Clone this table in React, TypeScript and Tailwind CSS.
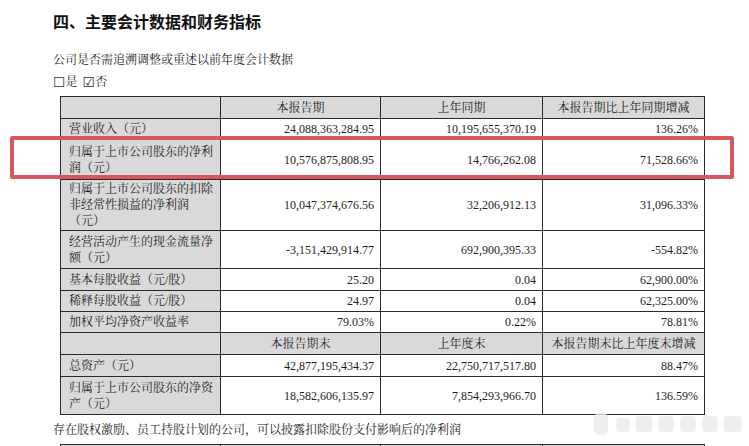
import React from 'react';

const serif = "font-['Liberation_Serif','Noto_Serif_CJK_SC','Noto_Sans_CJK_SC',serif]";

type Row = { label: string; a: string; b: string; c: string; h: string };

const rows: Row[] = [
  { label: '营业收入（元）', a: '24,088,363,284.95', b: '10,195,655,370.19', c: '136.26%', h: 'h-[21px]' },
  { label: '归属于上市公司股东的净利润（元）', a: '10,576,875,808.95', b: '14,766,262.08', c: '71,528.66%', h: 'h-[40px]' },
  { label: '归属于上市公司股东的扣除非经常性损益的净利润（元）', a: '10,047,374,676.56', b: '32,206,912.13', c: '31,096.33%', h: 'h-[51px]' },
  { label: '经营活动产生的现金流量净额（元）', a: '-3,151,429,914.77', b: '692,900,395.33', c: '-554.82%', h: 'h-[38px]' },
  { label: '基本每股收益（元/股）', a: '25.20', b: '0.04', c: '62,900.00%', h: 'h-[22px]' },
  { label: '稀释每股收益（元/股）', a: '24.97', b: '0.04', c: '62,325.00%', h: 'h-[21px]' },
  { label: '加权平均净资产收益率', a: '79.03%', b: '0.22%', c: '78.81%', h: 'h-[21px]' },
];

const rows2: Row[] = [
  { label: '总资产（元）', a: '42,877,195,434.37', b: '22,750,717,517.80', c: '88.47%', h: 'h-[22px]' },
  { label: '归属于上市公司股东的净资产（元）', a: '18,582,606,135.97', b: '7,854,293,966.70', c: '136.59%', h: 'h-[38px]' },
];

function HeadRow({ cols, h }: { cols: string[]; h: string }) {
  return (
    <tr className={`${h} bg-[#d9d9d9]`}>
      <td className="border border-[#2a2a2a]"></td>
      {cols.map((c) => (
        <td key={c} className="border border-[#2a2a2a] text-center px-1">{c}</td>
      ))}
    </tr>
  );
}

function DataRow({ r }: { r: Row }) {
  return (
    <tr className={r.h}>
      <td className="border border-[#2a2a2a] bg-[#d9d9d9] pl-[8px] pr-[4px] py-0 leading-[16px] align-middle">{r.label}</td>
      <td className="border border-[#2a2a2a] text-right pr-[6px]">{r.a}</td>
      <td className="border border-[#2a2a2a] text-right pr-[6px]">{r.b}</td>
      <td className="border border-[#2a2a2a] text-right pr-[6px]">{r.c}</td>
    </tr>
  );
}

export default function App() {
  return (
    <div className={`relative w-[749px] h-[446px] overflow-hidden bg-white text-[#1e1e1e] ${serif}`}>
      <div className="pl-[53px]">
        <h1 className="mt-[10px] leading-[23px] text-[16px] font-bold font-['Noto_Sans_CJK_SC',sans-serif] text-[#111]">
          四、主要会计数据和财务指标
        </h1>
        <p className="mt-[19px] leading-[16px] text-[12px]">公司是否需追溯调整或重述以前年度会计数据</p>
        <p className="mt-[6px] leading-[16px] text-[12px] flex items-center">
          <span className="font-['DejaVu_Sans',sans-serif] text-[14px] leading-[16px] text-[#333]">☐</span>
          <span>是</span>
          <span className="ml-[5px] font-['DejaVu_Sans',sans-serif] text-[14px] leading-[16px] text-[#333]">☑</span>
          <span>否</span>
        </p>

        <table className="mt-[6px] ml-[7px] w-[644px] table-fixed border-collapse text-[12px] leading-[16px]">
          <colgroup>
            <col className="w-[160px]" />
            <col className="w-[160px]" />
            <col className="w-[162px]" />
            <col className="w-[162px]" />
          </colgroup>
          <tbody>
            <HeadRow cols={['本报告期', '上年同期', '本报告期比上年同期增减']} h="h-[22px]" />
            {rows.map((r) => (
              <DataRow key={r.label} r={r} />
            ))}
            <HeadRow cols={['本报告期末', '上年度末', '本报告期末比上年度末增减']} h="h-[22px]" />
            {rows2.map((r) => (
              <DataRow key={r.label} r={r} />
            ))}
          </tbody>
        </table>

        <p className="mt-[7px] leading-[16px] text-[12px]">
          存在股权激励、员工持股计划的公司，可以披露扣除股份支付影响后的净利润
        </p>

        <table className="mt-[6px] ml-[7px] w-[644px] table-fixed border-collapse text-[12px]">
          <tbody>
            <tr className="h-[22px] bg-[#d9d9d9]">
              <td className="border border-[#2a2a2a] w-[160px]"></td>
              <td className="border border-[#2a2a2a] w-[160px]"></td>
              <td className="border border-[#2a2a2a] w-[162px]"></td>
              <td className="border border-[#2a2a2a] w-[162px]"></td>
            </tr>
          </tbody>
        </table>
      </div>

      {/* highlight box over the net profit row */}
      <div className="absolute left-[10px] top-[136px] w-[724px] h-[43px] border-[4px] border-[#d6575d] rounded-[2px] pointer-events-none"></div>

      {/* faint watermark */}
      <svg className="absolute left-[590px] top-[410px] pointer-events-none" width="156" height="28" viewBox="0 0 156 28">
        <g fill="#ececec" opacity="0.8">
          <rect x="4" y="3" width="14" height="22" rx="5" />
          <rect x="26" y="8" width="14" height="14" rx="4" />
          <rect x="46" y="6" width="16" height="16" rx="4" />
          <rect x="68" y="6" width="16" height="16" rx="4" />
          <rect x="90" y="6" width="16" height="16" rx="4" />
          <rect x="112" y="6" width="16" height="16" rx="4" />
          <rect x="134" y="6" width="18" height="16" rx="4" />
        </g>
      </svg>
    </div>
  );
}
